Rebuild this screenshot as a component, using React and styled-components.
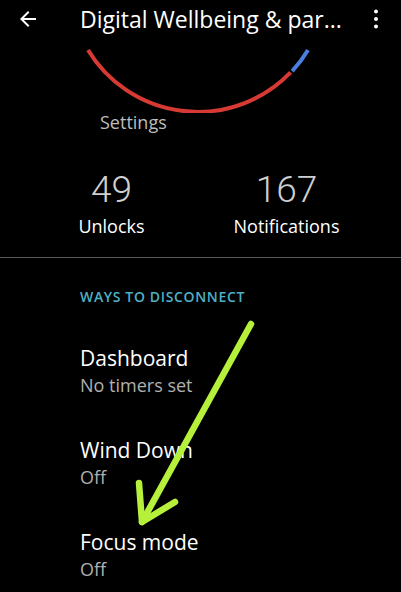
import styled, { createGlobalStyle } from "styled-components";

const GlobalStyle = createGlobalStyle`
  html, body {
    margin: 0;
    padding: 0;
    background: #000;
  }
  body {
    font-family: "Open Sans", Roboto, "Liberation Sans", sans-serif;
    color: #fff;
    -webkit-font-smoothing: antialiased;
  }
`;

const items = [
  { title: "Dashboard", sub: "No timers set" },
  { title: "Wind Down", sub: "Off" },
  { title: "Focus mode", sub: "Off" },
];

function App() {
  return (
    <Screen>
      <GlobalStyle />
      <TopBar>
        <IconSlot>
          <svg width="24" height="24" viewBox="0 0 24 24" fill="#fff">
            <path d="M20 11H7.83l5.59-5.59L12 4l-8 8 8 8 1.41-1.41L7.83 13H20v-2z" />
          </svg>
        </IconSlot>
        <Title>Digital Wellbeing &amp; par...</Title>
        <IconSlot>
          <svg width="24" height="24" viewBox="0 0 24 24" fill="#fff">
            <circle cx="12" cy="4.5" r="2" />
            <circle cx="12" cy="12" r="2" />
            <circle cx="12" cy="19.5" r="2" />
          </svg>
        </IconSlot>
      </TopBar>

      <RingBox>
        <svg width="401" height="75" viewBox="0 0 401 75">
          <path
            d="M88 12 A128.6 128.6 0 0 0 290.6 34.4"
            fill="none"
            stroke="#d63a33"
            strokeWidth="4"
          />
          <path
            d="M292.2 33.2 A128.6 128.6 0 0 0 308 12"
            fill="none"
            stroke="#4a7fe0"
            strokeWidth="4"
          />
        </svg>
      </RingBox>
      <AppLabel>Settings</AppLabel>

      <Stats>
        <Stat>
          <StatNumber>49</StatNumber>
          <StatLabel>Unlocks</StatLabel>
        </Stat>
        <Stat>
          <StatNumber>167</StatNumber>
          <StatLabel>Notifications</StatLabel>
        </Stat>
      </Stats>

      <Divider />

      <SectionHead>Ways to disconnect</SectionHead>

      <List>
        {items.map((it) => (
          <Item key={it.title}>
            <ItemTitle>{it.title}</ItemTitle>
            <ItemSub>{it.sub}</ItemSub>
          </Item>
        ))}
      </List>

      <Pointer width="401" height="592" viewBox="0 0 401 592">
        <g
          fill="none"
          stroke="#b6f03a"
          strokeWidth="6.5"
          strokeLinecap="round"
          strokeLinejoin="round"
        >
          <path d="M251 324 L142 522" />
          <path d="M139 483 L142 522 L175 502" />
        </g>
      </Pointer>
    </Screen>
  );
}

const Screen = styled.div`
  position: relative;
  width: 401px;
  height: 592px;
  overflow: hidden;
  background: #000;
`;

const TopBar = styled.div`
  display: flex;
  align-items: center;
  justify-content: space-between;
  height: 38px;
  padding: 0 13px 0 16px;
`;

const IconSlot = styled.div`
  display: flex;
  align-items: center;
  justify-content: center;
  width: 24px;
  height: 24px;
`;

const Title = styled.div`
  flex: 1;
  padding-left: 40px;
  font-size: 23px;
  font-weight: 400;
  line-height: 30px;
  color: #fff;
  white-space: nowrap;
`;

const RingBox = styled.div`
  height: 75px;
  svg {
    display: block;
  }
`;

const AppLabel = styled.div`
  margin-top: -1px;
  padding-left: 100px;
  font-size: 18px;
  line-height: 20px;
  color: #bdbdbd;
`;

const Stats = styled.div`
  display: grid;
  grid-template-columns: 175px 175px;
  padding-left: 24px;
  margin-top: 38px;
`;

const Stat = styled.div`
  display: flex;
  flex-direction: column;
  align-items: center;
  gap: 4px;
`;

const StatNumber = styled.div`
  font-family: Roboto, "Open Sans", sans-serif;
  font-size: 37px;
  font-weight: 300;
  line-height: 40px;
  color: #cfcfcf;
`;

const StatLabel = styled.div`
  font-size: 18px;
  line-height: 24px;
  color: #fff;
`;

const Divider = styled.div`
  height: 1px;
  margin-top: 19px;
  background: #5a5a5a;
`;

const SectionHead = styled.div`
  margin-top: 30px;
  padding-left: 80px;
  font-size: 14px;
  font-weight: 600;
  line-height: 18px;
  letter-spacing: 0.65px;
  text-transform: uppercase;
  color: #4fb1c6;
`;

const List = styled.div`
  display: flex;
  flex-direction: column;
  gap: 41px;
  margin-top: 39px;
  padding-left: 80px;
`;

const Item = styled.div`
  display: flex;
  flex-direction: column;
  gap: 3px;
`;

const ItemTitle = styled.div`
  font-size: 21px;
  line-height: 26px;
  color: #fff;
`;

const ItemSub = styled.div`
  font-size: 18px;
  line-height: 22px;
  color: #b0b0b0;
`;

const Pointer = styled.svg`
  position: absolute;
  left: 0;
  top: 0;
  pointer-events: none;
`;

export default App;
